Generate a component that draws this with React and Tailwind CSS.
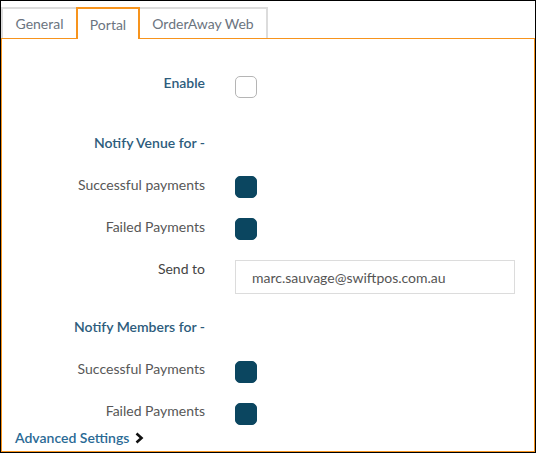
import React from "react";

const font = { fontFamily: "Lato, 'Liberation Sans', sans-serif" };

function Check({ checked, mt }) {
  return (
    <div
      className={
        "w-[22px] h-[22px] rounded-[5px] " +
        (checked ? "bg-[#0b4660] border border-[#0b4660]" : "bg-white border border-[#b5b5b5]") +
        " " + mt
      }
    />
  );
}

function Row({ label, labelClass, children, mt }) {
  return (
    <div className={"flex items-start " + mt}>
      <div className={"w-[203px] text-right text-[14px] leading-[20px] " + labelClass}>{label}</div>
      <div className="ml-[30px]">{children}</div>
    </div>
  );
}

const head = "text-[#2d5c7c] font-semibold";
const grey = "text-[#575757]";

export default function App() {
  return (
    <div className="w-[536px] h-[453px] border border-black bg-white flex flex-col" style={font}>
      <div className="flex items-end h-[37px]">
        <div className="h-[31px] w-[75px] border-t-2 border-l-2 border-[#dcdcdc] flex items-center justify-center text-[14px] text-[#6b7480]">General</div>
        <div className="h-[32px] w-[64px] border-t-2 border-l-2 border-r-2 border-[#f7941d] bg-white -mb-[1px] relative z-10 flex items-center justify-center text-[14px] text-[#6b7480]">Portal</div>
        <div className="h-[31px] w-[128px] border-t-2 border-r-2 border-[#dcdcdc] flex items-center justify-center text-[14px] text-[#6b7480]">OrderAway Web</div>
      </div>
      <div className="flex-1 border border-[#f7941d] flex flex-col pt-[34px]">
        <Row label="Enable" labelClass={head} mt="">
          <Check checked={false} mt="mt-[3px]" />
        </Row>
        <Row label="Notify Venue for -" labelClass={head} mt="mt-[35px]" />
        <Row label="Successful payments" labelClass={grey} mt="mt-[22px]">
          <Check checked mt="mt-[1px]" />
        </Row>
        <Row label="Failed Payments" labelClass={grey} mt="mt-[19px]">
          <Check checked mt="mt-[1px]" />
        </Row>
        <Row label="Send to" labelClass="text-[#444]" mt="mt-[19px]">
          <div className="mt-[1px] w-[280px] h-[34px] border border-[#dcdcdc] flex items-center pl-[16px] text-[14px] text-[#555]">
            marc.sauvage@swiftpos.com.au
          </div>
        </Row>
        <Row label="Notify Members for -" labelClass={head} mt="mt-[23px]" />
        <Row label="Successful Payments" labelClass={grey} mt="mt-[22px]">
          <Check checked mt="mt-[2px]" />
        </Row>
        <Row label="Failed Payments" labelClass={grey} mt="mt-[18px]">
          <Check checked mt="mt-[2px]" />
        </Row>
        <div className="mt-[3px] pl-[13px] flex items-center text-[14px] leading-[20px] text-[#2a6a95] font-semibold">
          Advanced Settings
          <svg className="ml-[6px]" width="9" height="12" viewBox="0 0 9 12">
            <path d="M1.5 1.5 L6.5 6 L1.5 10.5" stroke="#111" strokeWidth="2.6" fill="none" />
          </svg>
        </div>
      </div>
    </div>
  );
}
